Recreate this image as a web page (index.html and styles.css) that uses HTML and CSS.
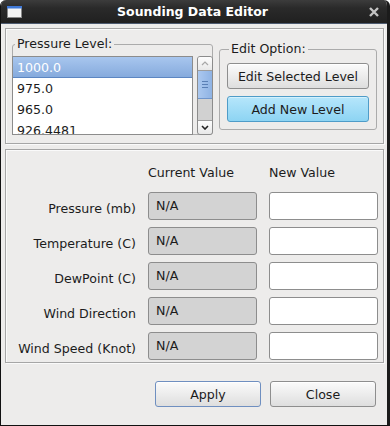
FILE: index.html
```html
<!DOCTYPE html>
<html lang="en">
<head>
    <meta charset="UTF-8">
    <title>Sounding Data Editor</title>
    <link rel="stylesheet" href="styles.css">
</head>
<body>
<div class="win">
    <div class="titlebar">
        <svg class="win-icon" width="15" height="12" viewBox="0 0 15 12">
            <rect x="0.5" y="0.5" width="14" height="11" fill="#f4f4f4" stroke="#8a8a8a"/>
            <rect x="0" y="0" width="15" height="2.5" fill="#3f78d6"/>
        </svg>
        <span class="title">Sounding Data Editor</span>
        <svg class="win-close" width="10" height="10" viewBox="0 0 10 10">
            <path d="M1 1 L9 9 M9 1 L1 9" stroke="#c4c4c4" stroke-width="2.4" fill="none"/>
        </svg>
    </div>

    <div class="main">
        <!-- level list + edit option -->
        <div class="frame top">
            <fieldset class="group plevel">
                <legend>Pressure Level:</legend>
                <div class="plist-wrap">
                    <ul class="plist">
                        <li class="sel">1000.0</li>
                        <li>975.0</li>
                        <li>965.0</li>
                        <li>926.4481</li>
                    </ul>
                    <div class="vscroll">
                        <div class="sb-btn up">
                            <svg width="8" height="5" viewBox="0 0 8 5"><path d="M1 4 L4 1 L7 4" stroke="#a8a8a8" stroke-width="1.2" fill="none"/></svg>
                        </div>
                        <div class="sb-thumb"><i></i><i></i><i></i></div>
                        <div class="sb-track"></div>
                        <div class="sb-btn down">
                            <svg width="8" height="5" viewBox="0 0 8 5"><path d="M1 1 L4 4 L7 1" stroke="#222" stroke-width="1.6" fill="none"/></svg>
                        </div>
                    </div>
                </div>
            </fieldset>

            <fieldset class="group editopt">
                <legend>Edit Option:</legend>
                <button class="btn">Edit Selected Level</button>
                <button class="btn hot">Add New Level</button>
            </fieldset>
        </div>

        <!-- values -->
        <div class="frame bottom">
            <div class="fields">
                <span></span>
                <span class="head">Current Value</span>
                <span class="head">New Value</span>

                <label class="lbl">Pressure (mb)</label>
                <div class="cur">N/A</div>
                <input class="new" type="text">

                <label class="lbl">Temperature (C)</label>
                <div class="cur">N/A</div>
                <input class="new" type="text">

                <label class="lbl">DewPoint (C)</label>
                <div class="cur">N/A</div>
                <input class="new" type="text">

                <label class="lbl">Wind Direction</label>
                <div class="cur">N/A</div>
                <input class="new" type="text">

                <label class="lbl">Wind Speed (Knot)</label>
                <div class="cur">N/A</div>
                <input class="new" type="text">
            </div>
        </div>

        <div class="actions">
            <button class="btn dflt">Apply</button>
            <button class="btn">Close</button>
        </div>
    </div>
</div>
</body>
</html>
```

FILE: styles.css
```css
* {
    margin: 0;
    padding: 0;
}

body {
    background-color: #fff;
    font: 12.6px "DejaVu Sans", "Liberation Sans", sans-serif;
    color: #1c1c1c;
}

.win {
    width: 390px;
    height: 426px;
    box-sizing: border-box;
    display: flex;
    flex-direction: column;
    background-color: #edeceb;
    border-left: 1px solid #111;
    border-right: 3px solid #1b1b1b;
    border-bottom: 1px solid #111;
    border-radius: 6px 6px 0 0;
    overflow: hidden;
}

/*---------------- title bar ----------------*/
.titlebar {
    height: 23px;
    border-bottom: 1px solid #4d5b70;
    background: linear-gradient(#3c3c3c, #2a2a2a 35%, #202020);
    display: grid;
    grid-template-columns: 1fr auto 1fr;
    align-items: center;
    padding-right: 3px;
}

.win-icon {
    margin-left: 6px;
    display: block;
}

.title {
    color: #fff;
    font-weight: bold;
    font-size: 12.5px;
}

.win-close {
    justify-self: end;
    margin-right: 5px;
    display: block;
}

/*---------------- body ----------------*/
.main {
    flex: 1;
    padding: 4px 3px 0 4px;
}

.frame {
    border: 1px solid #a6a6a6;
    box-shadow: 1px 1px 0 #fafafa, inset 1px 1px 0 #fafafa;
}

.frame.top {
    display: flex;
    align-items: center;
    gap: 6px;
    padding: 7px 5px 8px 6px;
}

.frame.bottom {
    margin-top: 5px;
    padding: 15px 0 2px 0;
}

.group {
    border: 1px solid #ababab;
    border-radius: 3px;
    min-width: 0;
    box-sizing: border-box;
}

.group legend {
    margin-left: 2px;
    padding: 0 2px;
    line-height: 16px;
}

/* pressure list */
.plevel {
    width: 201px;
    padding-top: 4px;
}

.plist-wrap {
    display: flex;
    gap: 4px;
    height: 79px;
    margin: 0 -1px -1px -1px;
}

.plist {
    list-style: none;
    width: 181px;
    box-sizing: border-box;
    border: 1px solid #8c8c8c;
    background-color: #fff;
    overflow: hidden;
}

.plist li {
    height: 21px;
    line-height: 21px;
    padding-left: 4px;
    white-space: nowrap;
}

.plist li.sel {
    color: #fff;
    background: linear-gradient(#a8c6ee, #84a9dc);
    box-shadow: inset 0 -1px 0 #5c86c2;
}

.vscroll {
    width: 16px;
    box-sizing: border-box;
    border: 1px solid #8c8c8c;
    border-radius: 3px;
    display: flex;
    flex-direction: column;
    background-color: #d1d1d1;
    overflow: hidden;
}

.sb-btn {
    height: 13px;
    background: linear-gradient(#fdfdfd, #e8e8e8);
    display: flex;
    align-items: center;
    justify-content: center;
}

.sb-btn svg {
    display: block;
}

.sb-btn.up {
    border-bottom: 1px solid #9c9c9c;
}

.sb-btn.down {
    margin-top: auto;
    border-top: 1px solid #9c9c9c;
    border-radius: 0 0 2px 2px;
}

.sb-thumb {
    height: 27px;
    background: linear-gradient(90deg, #abc8ef, #8fb3e4);
    border-bottom: 1px solid #6f95cb;
    display: flex;
    flex-direction: column;
    align-items: center;
    justify-content: center;
    gap: 2px;
}

.sb-thumb i {
    width: 6px;
    height: 1px;
    background-color: #5a7fb5;
}

/* edit option */
.editopt {
    width: 158px;
    padding: 6px 7px 7px;
    display: flex;
    flex-direction: column;
    gap: 7px;
}

.btn {
    font: inherit;
    color: #1c1c1c;
    height: 26px;
    border: 1px solid #8e8e8e;
    border-radius: 3px;
    background: linear-gradient(#fbfbfb, #dedede);
    box-shadow: inset 0 1px 0 #fff;
}

.editopt .btn {
    width: 142px;
}

.btn.hot {
    background: linear-gradient(#b6e6fb, #8dd4f3);
    border-color: #4f9cc8;
    box-shadow: inset 0 1px 0 #d4f1fd;
}

.btn.dflt {
    border-color: #6f8fc0;
}

/* values grid */
.fields {
    display: grid;
    grid-template-columns: 130px 109px 109px;
    column-gap: 12px;
    row-gap: 7px;
}

.head {
    line-height: 16px;
    margin-bottom: 4px;
}

.lbl {
    text-align: right;
    align-self: center;
    padding-top: 4px;
    white-space: nowrap;
}

.cur {
    height: 28px;
    box-sizing: border-box;
    border: 1px solid #8d8d8d;
    border-radius: 3px;
    background-color: #d3d3d3;
    padding-left: 7px;
    line-height: 25px;
}

.new {
    height: 28px;
    width: 109px;
    box-sizing: border-box;
    border: 1px solid #8d8d8d;
    border-radius: 3px;
    background-color: #fff;
    font: inherit;
    outline: none;
}

/*---------------- bottom buttons ----------------*/
.actions {
    display: flex;
    justify-content: flex-end;
    gap: 9px;
    padding: 18px 8px 0 0;
}

.actions .btn {
    width: 106px;
}
```
